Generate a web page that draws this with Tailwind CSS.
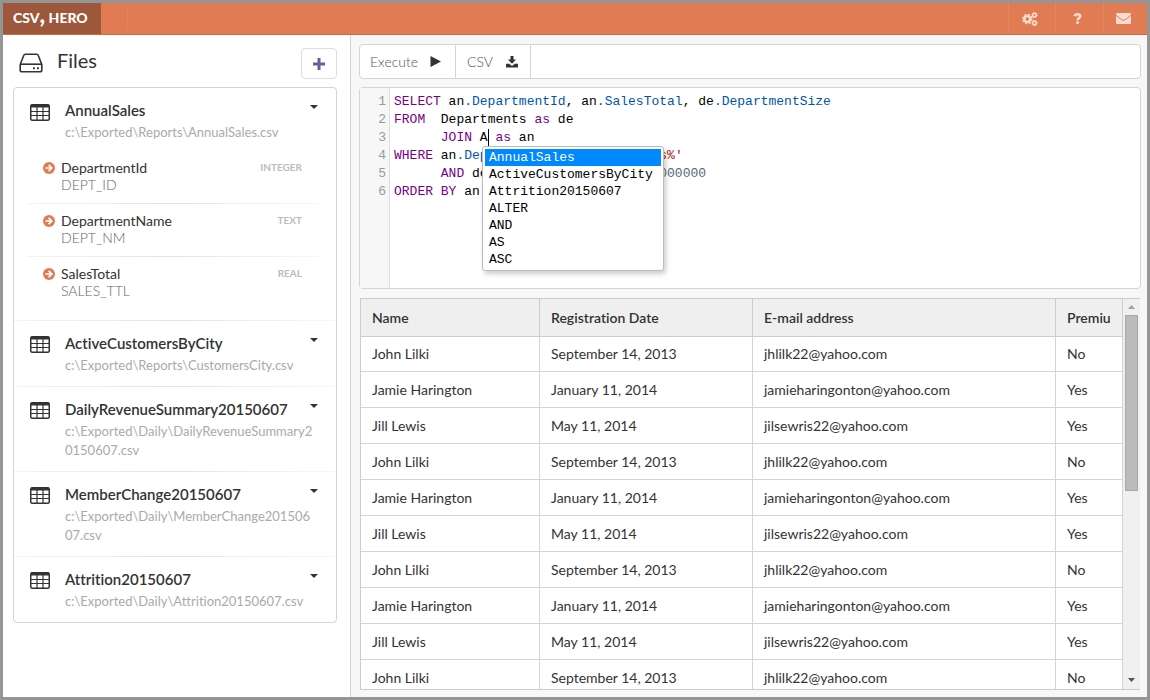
<!DOCTYPE html>
<html lang="en">
<head>
    <meta charset="UTF-8">
    <meta name="viewport" content="width=device-width, initial-scale=1.0">
    <title>CSV, Hero</title>
    <script src="https://cdn.jsdelivr.net/npm/@tailwindcss/browser@4"></script>
</head>
<body class="h-screen flex flex-col overflow-hidden border-3 border-[#959595] bg-white font-['Lato',sans-serif] text-sm text-[#333] [font-variant-ligatures:none]">

    <!-- shared icons -->
    <svg class="hidden">
        <symbol id="grid" viewBox="0 0 20 17">
            <rect x="0.75" y="0.75" width="18.5" height="15.5" rx="1.5" fill="none" stroke="#333" stroke-width="1.5"/>
            <path d="M1 0.5h18v3H1z" fill="#333"/>
            <path d="M1 7.5h18M1 11.5h18M7 3v13M13 3v13" stroke="#333" stroke-width="1.2" fill="none"/>
        </symbol>
        <symbol id="arrow" viewBox="0 0 12 12">
            <circle cx="6" cy="6" r="6" fill="#e07b53"/>
            <path d="M2.4 6h6M5.6 2.8L8.8 6L5.6 9.2" stroke="#fff" stroke-width="1.7" fill="none"/>
        </symbol>
    </svg>

    <header class="flex shrink-0 h-8 bg-[#e07b53] border-b border-[#d0693f]">
        <a href="#" class="w-[98px] pl-[10px] leading-[30px] bg-[#9d573a] text-white font-black text-sm whitespace-nowrap">CSV<span class="text-2xl leading-5">,</span> HERO</a>
        <div class="w-[27px] my-1 border-r border-[#e4835c]"></div>
        <nav class="ml-auto flex">
            <button aria-label="Settings" class="w-[47px] pr-1 flex items-center justify-center border-l border-[#e4865f]">
                <svg class="w-4 h-[14px]" viewBox="0 0 16 14" fill="none" stroke="#f7dccf">
                    <circle cx="5.3" cy="7" r="3" stroke-width="2.6"/>
                    <circle cx="5.3" cy="7" r="4.7" stroke-width="1.4" stroke-dasharray="1.9 1.8"/>
                    <circle cx="12.5" cy="3" r="1.8" stroke-width="1.5"/>
                    <circle cx="12.5" cy="3" r="2.7" stroke-width="0.9" stroke-dasharray="1.2 0.9"/>
                    <circle cx="12.5" cy="11" r="1.8" stroke-width="1.5"/>
                    <circle cx="12.5" cy="11" r="2.7" stroke-width="0.9" stroke-dasharray="1.2 0.9"/>
                </svg>
            </button>
            <button aria-label="Help" class="w-12 pr-1 flex items-center justify-center border-l border-[#e4865f]">
                <svg class="w-[9px] h-[11px]" viewBox="0 0 8 11">
                    <path d="M1.2 3.3C1.5 1.9 2.6 1.3 4 1.3C5.6 1.3 6.6 2.1 6.6 3.3C6.6 5 4.1 4.9 4.1 7.2" fill="none" stroke="#f7dccf" stroke-width="2.6"/>
                    <path d="M2.8 8.3h2.6v2.6H2.8z" fill="#f7dccf"/>
                </svg>
            </button>
            <button aria-label="Mail" class="w-11 pr-1 flex items-center justify-center border-l border-[#e4865f]">
                <svg class="w-[15px] h-[11px]" viewBox="0 0 15 11">
                    <rect width="15" height="11" rx="1" fill="#f7dccf"/>
                    <path d="M0 2.2C2.5 4.2 6 7.4 7.5 7.4S12.5 4.2 15 2.2" fill="none" stroke="#e07b53" stroke-width="1"/>
                </svg>
            </button>
        </nav>
    </header>

    <div class="flex flex-1 min-h-0">
        <!-- files -->
        <aside class="w-[347px] shrink-0 pl-[10px] pr-[13px] pt-[13px]">
            <div class="flex items-start h-[39px]">
                <svg class="w-6 h-5 mt-[5px] ml-[6px]" viewBox="0 0 24 20" fill="none" stroke="#333" stroke-width="1.6" stroke-linejoin="round">
                    <path d="M1.2 11.5L4.8 2.3Q5.2 1.2 6.3 1.2H17.7Q18.8 1.2 19.2 2.3L22.8 11.5V17Q22.8 18.8 21 18.8H3Q1.2 18.8 1.2 17Z"/>
                    <path d="M1.5 11.2H22.5"/>
                    <path d="M14 15.2h1.8M18 15.2h1.8" stroke-width="1.9"/>
                </svg>
                <h1 class="ml-[14px] text-xl leading-6">Files</h1>
                <button aria-label="Add file" class="ml-auto w-9 h-[31px] flex items-center justify-center rounded border border-[#ddd]">
                    <svg class="w-3 h-3" viewBox="0 0 12 12"><path d="M6 0v12M0 6h12" stroke="#6a5f9d" stroke-width="3"/></svg>
                </button>
            </div>

            <ul class="rounded border border-[#d4d4d5]">
                <li>
                    <div class="flex pl-4 pr-[13px] pt-[11px]">
                        <svg class="w-5 h-[17px] mt-[5px] shrink-0"><use href="#grid"/></svg>
                        <div class="ml-[15px] flex-1 min-w-0">
                            <div class="flex justify-between">
                                <h2 class="text-[15px] leading-[22px] font-semibold">AnnualSales</h2>
                                <button aria-label="Collapse" class="w-2 h-1 mt-[6px] mr-[5px] bg-[#333] [clip-path:polygon(0_0,100%_0,50%_100%)]"></button>
                            </div>
                            <p class="mt-[2px] mr-2 text-[13px] leading-[19px] text-[#aaa] break-all">c:\Exported\Reports\AnnualSales.csv</p>
                        </div>
                    </div>
                    <ul class="px-[13px] pt-[9px] pb-[11px]">
                        <li class="flex pl-4 pr-[21px] pt-2 pb-[10px] leading-[17px]">
                            <svg class="w-3 h-3 mt-[3px] shrink-0"><use href="#arrow"/></svg>
                            <div class="ml-[6px]">DepartmentId<br><span class="font-light text-[#666]">DEPT_ID</span></div>
                            <span class="ml-auto text-[10px] leading-4 font-bold text-[#bbb]">INTEGER</span>
                        </li>
                        <li class="h-px bg-linear-to-r from-[#f4f4f4] via-[#e4e4e4] to-[#f8f8f8]"></li>
                        <li class="flex pl-4 pr-[21px] pt-2 pb-[10px] leading-[17px]">
                            <svg class="w-3 h-3 mt-[3px] shrink-0"><use href="#arrow"/></svg>
                            <div class="ml-[6px]">DepartmentName<br><span class="font-light text-[#666]">DEPT_NM</span></div>
                            <span class="ml-auto text-[10px] leading-4 font-bold text-[#bbb]">TEXT</span>
                        </li>
                        <li class="h-px bg-linear-to-r from-[#f4f4f4] via-[#e4e4e4] to-[#f8f8f8]"></li>
                        <li class="flex pl-4 pr-[21px] pt-2 pb-[10px] leading-[17px]">
                            <svg class="w-3 h-3 mt-[3px] shrink-0"><use href="#arrow"/></svg>
                            <div class="ml-[6px]">SalesTotal<br><span class="font-light text-[#666]">SALES_TTL</span></div>
                            <span class="ml-auto text-[10px] leading-4 font-bold text-[#bbb]">REAL</span>
                        </li>
                    </ul>
                </li>
                <li class="h-px bg-linear-to-r from-[#f4f4f4] via-[#e4e4e4] to-[#f8f8f8]"></li>
                <li class="flex pl-4 pr-[13px] py-[11px]">
                    <svg class="w-5 h-[17px] mt-1 shrink-0"><use href="#grid"/></svg>
                    <div class="ml-[15px] flex-1 min-w-0">
                        <div class="flex justify-between">
                            <h2 class="text-[15px] leading-[22px] font-semibold">ActiveCustomersByCity</h2>
                            <button aria-label="Expand" class="w-2 h-1 mt-[6px] mr-[5px] bg-[#333] [clip-path:polygon(0_0,100%_0,50%_100%)]"></button>
                        </div>
                        <p class="mt-[2px] mr-2 text-[13px] leading-[19px] text-[#aaa] break-all">c:\Exported\Reports\CustomersCity.csv</p>
                    </div>
                </li>
                <li class="h-px bg-linear-to-r from-[#f4f4f4] via-[#e4e4e4] to-[#f8f8f8]"></li>
                <li class="flex pl-4 pr-[13px] py-[11px]">
                    <svg class="w-5 h-[17px] mt-1 shrink-0"><use href="#grid"/></svg>
                    <div class="ml-[15px] flex-1 min-w-0">
                        <div class="flex justify-between">
                            <h2 class="text-[15px] leading-[22px] font-semibold">DailyRevenueSummary20150607</h2>
                            <button aria-label="Expand" class="w-2 h-1 mt-[6px] mr-[5px] bg-[#333] [clip-path:polygon(0_0,100%_0,50%_100%)]"></button>
                        </div>
                        <p class="mt-[2px] mr-2 text-[13px] leading-[19px] text-[#aaa] break-all">c:\Exported\Daily\DailyRevenueSummary20150607.csv</p>
                    </div>
                </li>
                <li class="h-px bg-linear-to-r from-[#f4f4f4] via-[#e4e4e4] to-[#f8f8f8]"></li>
                <li class="flex pl-4 pr-[13px] py-[11px]">
                    <svg class="w-5 h-[17px] mt-1 shrink-0"><use href="#grid"/></svg>
                    <div class="ml-[15px] flex-1 min-w-0">
                        <div class="flex justify-between">
                            <h2 class="text-[15px] leading-[22px] font-semibold">MemberChange20150607</h2>
                            <button aria-label="Expand" class="w-2 h-1 mt-[6px] mr-[5px] bg-[#333] [clip-path:polygon(0_0,100%_0,50%_100%)]"></button>
                        </div>
                        <p class="mt-[2px] mr-2 text-[13px] leading-[19px] text-[#aaa] break-all">c:\Exported\Daily\MemberChange20150607.csv</p>
                    </div>
                </li>
                <li class="h-px bg-linear-to-r from-[#f4f4f4] via-[#e4e4e4] to-[#f8f8f8]"></li>
                <li class="flex pl-4 pr-[13px] py-[11px]">
                    <svg class="w-5 h-[17px] mt-1 shrink-0"><use href="#grid"/></svg>
                    <div class="ml-[15px] flex-1 min-w-0">
                        <div class="flex justify-between">
                            <h2 class="text-[15px] leading-[22px] font-semibold">Attrition20150607</h2>
                            <button aria-label="Expand" class="w-2 h-1 mt-[6px] mr-[5px] bg-[#333] [clip-path:polygon(0_0,100%_0,50%_100%)]"></button>
                        </div>
                        <p class="mt-[2px] mr-2 text-[13px] leading-[19px] text-[#aaa] break-all">c:\Exported\Daily\Attrition20150607.csv</p>
                    </div>
                </li>
            </ul>
        </aside>

        <main class="flex-1 min-w-0 flex flex-col border-l border-[#d4d4d5] bg-[#f7f7f7] pl-2 pr-[6px] pt-[9px] pb-[7px]">
            <div class="flex shrink-0 h-[35px] bg-white rounded border border-[#d4d4d5] font-light text-[#555]">
                <button class="flex items-center pl-[10px] pr-[14px] w-24 justify-between border-r border-[#d4d4d5]">Execute
                    <svg class="w-[11px] h-[11px]" viewBox="0 0 11 11"><path d="M0.5 0L11 5.5L0.5 11z" fill="#333"/></svg>
                </button>
                <button class="flex items-center pl-[11px] pr-3 w-[75px] justify-between border-r border-[#d4d4d5]">CSV
                    <svg class="w-3 h-3" viewBox="0 0 12 12" fill="#333"><path d="M4.5 0h3v3.5H10L6 7.8L2 3.5h2.5z"/><path d="M0 7.8h3.3L6 10L8.7 7.8H12V11.5H0z"/></svg>
                </button>
            </div>

            <!-- query editor -->
            <div class="relative shrink-0 mt-2 h-[202px] flex bg-white rounded-sm border border-[#d4d4d5] font-['Liberation_Mono',monospace] text-[13px] leading-[18px]">
                <pre class="w-[30px] pt-[5px] pr-[3px] text-right text-[#999] bg-[#f7f7f7] border-r border-[#ddd] font-['Liberation_Mono',monospace]">1
2
3
4
5
6</pre>
                <pre contenteditable="true" spellcheck="false" role="textbox" aria-label="Query" class="flex-1 pt-[5px] pl-1 text-black outline-none font-['Liberation_Mono',monospace]"><span class="text-[#708]">SELECT</span> an<span class="text-[#05a]">.DepartmentId</span>, an<span class="text-[#05a]">.SalesTotal</span>, de<span class="text-[#05a]">.DepartmentSize</span>
<span class="text-[#708]">FROM</span>  Departments <span class="text-[#708]">as</span> de
      <span class="text-[#708]">JOIN</span> A<span class="border-l border-black -mr-px py-px"></span> <span class="text-[#708]">as</span> an
<span class="text-[#708]">WHERE</span> an<span class="text-[#05a]">.DepartmentId</span> <span class="text-[#708]">LIKE</span> <span class="text-[#a11]">'Markets%'</span>
      <span class="text-[#708]">AND</span> de<span class="text-[#05a]">.DepartmentSize</span> &gt; <span class="text-[#567]">1000000000</span>
<span class="text-[#708]">ORDER BY</span> an<span class="text-[#05a]">.SalesTotal</span></pre>
                <ul class="absolute left-[122px] top-[58px] w-[182px] p-[2px] bg-white border border-[#bbb] rounded-[3px] shadow-[2px_3px_5px_rgba(0,0,0,0.2)] text-black leading-[17px]">
                    <li class="px-1 bg-[#08f] text-white">AnnualSales</li>
                    <li class="px-1">ActiveCustomersByCity</li>
                    <li class="px-1">Attrition20150607</li>
                    <li class="px-1">ALTER</li>
                    <li class="px-1">AND</li>
                    <li class="px-1">AS</li>
                    <li class="px-1">ASC</li>
                </ul>
            </div>

            <!-- results -->
            <div class="flex flex-1 min-h-0 mt-[9px] mx-px border border-r-0 border-[#ccc]">
                <div class="flex-1 min-w-0 overflow-hidden">
                    <table class="w-full table-fixed border-separate border-spacing-0 bg-white text-left [&_td]:h-9 [&_td]:px-[11px] [&_td]:border-r [&_td]:border-b [&_td]:border-[#d4d4d5] [&_th]:h-[38px] [&_th]:px-[11px] [&_th]:font-semibold [&_th]:border-r [&_th]:border-b [&_th]:border-[#ccc] [&_th]:bg-[#efefef] [&_tbody_tr:first-child_td]:h-[35px]">
                        <colgroup>
                            <col class="w-[179px]">
                            <col class="w-[213px]">
                            <col>
                            <col class="w-[67px]">
                        </colgroup>
                        <thead>
                            <tr><th>Name</th><th>Registration Date</th><th>E-mail address</th><th><div class="overflow-hidden">Premium</div></th></tr>
                        </thead>
                        <tbody>
                            <tr><td>John Lilki</td><td>September 14, 2013</td><td>jhlilk22@yahoo.com</td><td>No</td></tr>
                            <tr><td>Jamie Harington</td><td>January 11, 2014</td><td>jamieharingonton@yahoo.com</td><td>Yes</td></tr>
                            <tr><td>Jill Lewis</td><td>May 11, 2014</td><td>jilsewris22@yahoo.com</td><td>Yes</td></tr>
                            <tr><td>John Lilki</td><td>September 14, 2013</td><td>jhlilk22@yahoo.com</td><td>No</td></tr>
                            <tr><td>Jamie Harington</td><td>January 11, 2014</td><td>jamieharingonton@yahoo.com</td><td>Yes</td></tr>
                            <tr><td>Jill Lewis</td><td>May 11, 2014</td><td>jilsewris22@yahoo.com</td><td>Yes</td></tr>
                            <tr><td>John Lilki</td><td>September 14, 2013</td><td>jhlilk22@yahoo.com</td><td>No</td></tr>
                            <tr><td>Jamie Harington</td><td>January 11, 2014</td><td>jamieharingonton@yahoo.com</td><td>Yes</td></tr>
                            <tr><td>Jill Lewis</td><td>May 11, 2014</td><td>jilsewris22@yahoo.com</td><td>Yes</td></tr>
                            <tr><td>John Lilki</td><td>September 14, 2013</td><td>jhlilk22@yahoo.com</td><td>No</td></tr>
                        </tbody>
                    </table>
                </div>
                <div class="w-[17px] flex flex-col items-center bg-[#f0f0f0] pt-[6px] pb-[7px]">
                    <div class="w-[7px] h-1 bg-[#a0a0a0] [clip-path:polygon(50%_0,100%_100%,0_100%)]"></div>
                    <div class="w-[13px] h-[176px] mt-[6px] bg-[#bbb] border border-[#a8a8a8]"></div>
                    <div class="w-[7px] h-1 mt-auto bg-[#505050] [clip-path:polygon(0_0,100%_0,50%_100%)]"></div>
                </div>
            </div>
        </main>
    </div>
</body>
</html>
